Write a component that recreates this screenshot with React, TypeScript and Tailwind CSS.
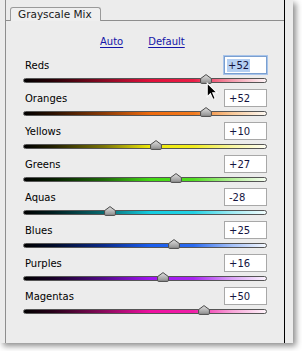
import React from 'react';

interface MixChannel {
  name: string;
  value: number;
  track: string;
}

const channels: MixChannel[] = [
  { name: 'Reds', value: 52, track: 'bg-[linear-gradient(to_right,#000_0%,#2a0006_12%,#8a0a24_33%,#e0103a_52%,#ea1e46_70%,#f49aac_86%,#fdf4f6_100%)]' },
  { name: 'Oranges', value: 52, track: 'bg-[linear-gradient(to_right,#000_0%,#2a1000_12%,#8a3a06_33%,#ee6a0e_52%,#f27a1e_70%,#f8c898_86%,#fdf8f2_100%)]' },
  { name: 'Yellows', value: 10, track: 'bg-[linear-gradient(to_right,#000_0%,#222000_12%,#7a7406_33%,#eee80a_52%,#f0ec20_70%,#f8f6a0_86%,#fefef4_100%)]' },
  { name: 'Greens', value: 27, track: 'bg-[linear-gradient(to_right,#000_0%,#061e00_12%,#1e6a08_33%,#44d814_52%,#52dc22_70%,#b4f098_86%,#f6fdf2_100%)]' },
  { name: 'Aquas', value: -28, track: 'bg-[linear-gradient(to_right,#000_0%,#001e20_12%,#086a70_33%,#14cce0_52%,#24d2e4_70%,#a0ecf4_86%,#f2fcfd_100%)]' },
  { name: 'Blues', value: 25, track: 'bg-[linear-gradient(to_right,#000_0%,#000a28_12%,#0a2a8a_33%,#1a5ef0_52%,#2a6af0_70%,#a4c0f8_86%,#f4f8fe_100%)]' },
  { name: 'Purples', value: 16, track: 'bg-[linear-gradient(to_right,#000_0%,#180028_12%,#520a8a_33%,#a014f0_52%,#a826f0_70%,#dca4f8_86%,#fbf4fe_100%)]' },
  { name: 'Magentas', value: 50, track: 'bg-[linear-gradient(to_right,#000_0%,#28001a_12%,#8a0a5c_33%,#ee10a0_52%,#f020a8_70%,#f8a4d8_86%,#fef4fa_100%)]' },
];

const formatValue = (v: number) => (v > 0 ? `+${v}` : `${v}`);

const Thumb: React.FC<{ value: number }> = ({ value }) => (
  <svg
    className="absolute top-[-4px]"
    style={{ left: 115 + value * 1.2 }}
    width="12"
    height="10"
    viewBox="0 0 12 10"
  >
    <defs>
      <linearGradient id="thumbFill" x1="0" y1="0" x2="0" y2="1">
        <stop offset="0" stopColor="#e2e2e2" />
        <stop offset="1" stopColor="#8c8c8c" />
      </linearGradient>
    </defs>
    <path d="M6 0.6 L11.4 4.6 L11.4 8.4 Q11.4 9.4 10.4 9.4 L1.6 9.4 Q0.6 9.4 0.6 8.4 L0.6 4.6 Z" fill="url(#thumbFill)" stroke="#4a4a4a" strokeWidth="1" />
  </svg>
);

const SliderRow: React.FC<{ channel: MixChannel; focused?: boolean }> = ({ channel, focused }) => (
  <div className="h-[33px] flex flex-col">
    <div className="flex items-center justify-between h-[18px]">
      <span className="pl-[2px] text-[10px] text-black">{channel.name}</span>
      {focused ? (
        <div className="w-[43px] h-[18px] border border-[#7a9fd0] bg-white shadow-[0_0_0_1px_#a8c4ea] flex items-center pl-[2px]">
          <span className="bg-[#b4cff2] text-[10px] text-[#141440] px-[1px] leading-[13px]">{formatValue(channel.value)}</span>
        </div>
      ) : (
        <div className="w-[43px] h-[18px] border border-[#a8a8a8] bg-white flex items-center pl-[4px] text-[10px] text-[#141440]">
          {formatValue(channel.value)}
        </div>
      )}
    </div>
    <div className="relative mt-[4px] h-[5px]">
      <div className={`h-[5px] rounded-full border border-[#555] ${channel.track}`} />
      <Thumb value={channel.value} />
    </div>
  </div>
);

const App: React.FC = () => {
  return (
    <div className="w-[302px] h-[351px] bg-white relative overflow-hidden font-['DejaVu_Sans',sans-serif]">
      <div className="w-[293px] h-[343px] bg-[#ececec] pl-[5px] shadow-[3px_3px_6px_rgba(0,0,0,0.45)]">
        <div className="w-[280px] h-[343px] border-l border-[#8e8e8e] border-r border-r-black">
          {/* Tab header */}
          <div className="flex items-end h-[21px] pt-[7px]">
            <div className="w-[4px] border-b border-[#8e8e8e]" />
            <div className="w-[91px] h-[14px] border border-b-0 border-[#9a9a9a] rounded-t-[3px] bg-[#efefef] flex items-center pl-[7px] text-[10.5px] text-[#1a1a1a]">
              Grayscale Mix
            </div>
            <div className="flex-1 border-b border-[#8e8e8e]" />
          </div>

          <div className="flex gap-[25px] pl-[94px] mt-[13px] h-[14px] items-center text-[10px] text-[#1414a8]">
            <span className="underline underline-offset-2">Auto</span>
            <span className="underline underline-offset-2">Default</span>
          </div>

          <div className="mt-[8px] px-[17px] relative">
            {channels.map((c, i) => (
              <SliderRow key={c.name} channel={c} focused={i === 0} />
            ))}
            {/* mouse pointer */}
            <svg className="absolute left-[200px] top-[26px]" width="13" height="19" viewBox="0 0 12 18">
              <path d="M1 1 L1 14 L4 11 L6.5 16.5 L8.6 15.6 L6.2 10.2 L10.4 10.2 Z" fill="#000" stroke="#fff" strokeWidth="1" />
            </svg>
          </div>
        </div>
      </div>
    </div>
  );
};

export default App;
